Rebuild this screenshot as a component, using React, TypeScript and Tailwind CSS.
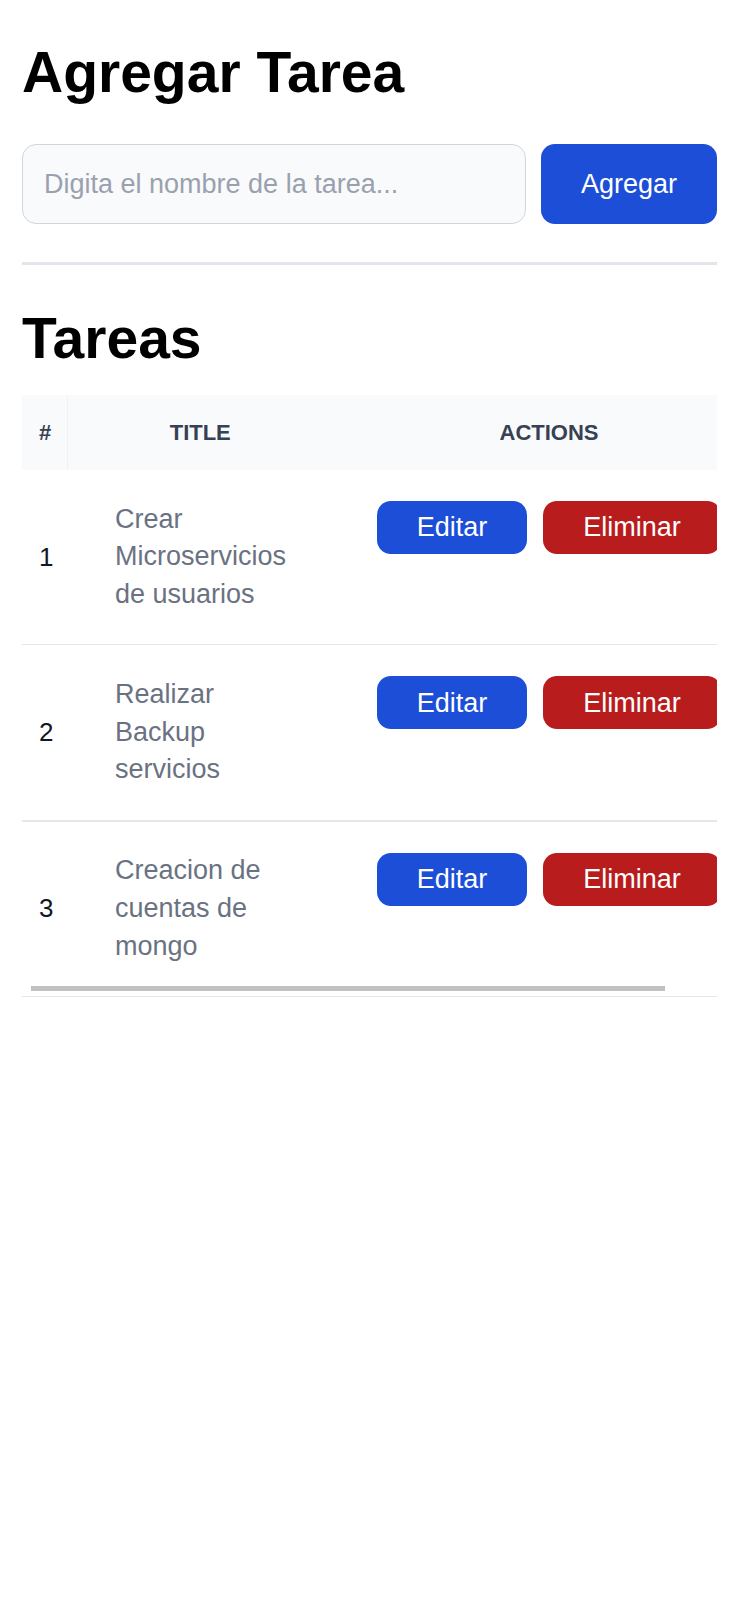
import { useState } from "react"

interface Task {
  id: number
  title: string
}

const initialTasks: Task[] = [
  { id: 1, title: "Crear Microservicios de usuarios" },
  { id: 2, title: "Realizar Backup servicios" },
  { id: 3, title: "Creacion de cuentas de mongo" },
]

// row separators as they render in the capture (middle one is heavier)
const rowBorders = ["border-b", "border-b-2", "border-b"]

export default function App() {
  const [tasks, setTasks] = useState<Task[]>(initialTasks)
  const [name, setName] = useState("")

  function handleAdd() {
    const title = name.trim()
    if (!title) return
    setTasks((prev) => [...prev, { id: prev.length + 1, title }])
    setName("")
  }

  function handleDelete(id: number) {
    setTasks((prev) => prev.filter((task) => task.id !== id))
  }

  return (
    <div className="min-h-screen bg-white px-[22px] pt-[44px] font-['Liberation_Sans',Arial,sans-serif] text-black">
      <h1 className="text-[57px] font-bold leading-[56px]">Agregar Tarea</h1>

      <div className="mt-[44px] flex gap-[15px]">
        <input
          value={name}
          onChange={(e) => setName(e.target.value)}
          placeholder="Digita el nombre de la tarea..."
          className="h-[80px] min-w-0 flex-1 rounded-[14px] border border-gray-300 bg-gray-50 px-[21px] text-[27px] text-gray-700 outline-none placeholder:text-gray-400"
        />
        <button
          onClick={handleAdd}
          className="h-[80px] w-[176px] rounded-[14px] bg-[#1d4ed8] text-[27px] text-white"
        >
          Agregar
        </button>
      </div>

      <div className="mt-[38px] h-[3px] bg-[#e3e5eb]" />

      <h2 className="mt-[45px] text-[57px] font-bold leading-[56px]">Tareas</h2>

      <div className="relative mt-[29px] overflow-hidden">
        <table className="w-[743px] table-fixed border-collapse text-left">
          <colgroup>
            <col className="w-[45px]" />
            <col className="w-[266px]" />
            <col className="w-[432px]" />
          </colgroup>
          <thead className="bg-gray-50">
            <tr className="h-[75px] text-[22px] font-bold uppercase text-gray-700">
              <th className="border-r border-[#f0f2f5] pl-[17px] text-left">#</th>
              <th className="text-center">Title</th>
              <th className="text-center">Actions</th>
            </tr>
          </thead>
          <tbody>
            {tasks.map((task, i) => (
              <tr key={task.id} className={`${rowBorders[i % 3]} border-gray-200`}>
                <td className="pl-[17px] align-middle text-[26px] text-gray-900">{task.id}</td>
                <td className="py-[30.5px] pl-12 align-middle">
                  <div className="w-[185px] text-[27px] leading-[37.8px] text-gray-500">{task.title}</div>
                </td>
                <td className="pt-[31px] align-top">
                  <div className="flex justify-center gap-4">
                    <button className="h-[53px] w-[150px] rounded-[14px] bg-[#1d4ed8] text-[27px] text-white">
                      Editar
                    </button>
                    <button
                      onClick={() => handleDelete(task.id)}
                      className="h-[53px] w-[178px] rounded-[14px] bg-[#b91c1c] text-[27px] text-white"
                    >
                      Eliminar
                    </button>
                  </div>
                </td>
              </tr>
            ))}
          </tbody>
        </table>
        {/* overlay scrollbar thumb */}
        <div className="absolute bottom-[6px] left-[9px] h-[5px] w-[634px] bg-[#c1c1c1]" />
      </div>
    </div>
  )
}
